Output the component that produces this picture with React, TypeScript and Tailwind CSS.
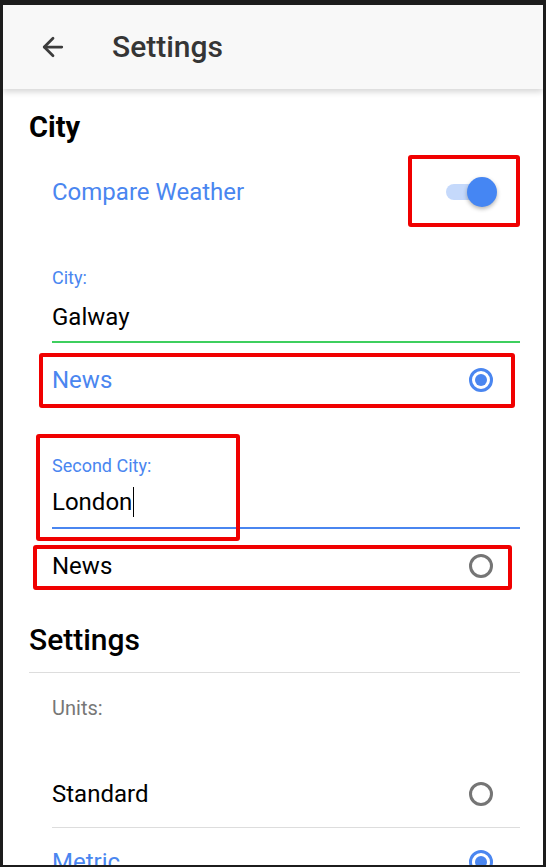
import * as React from 'react';
import { ArrowLeft } from 'lucide-react';

const Radio: React.FC<{ checked?: boolean }> = ({ checked }) => (
  <div
    className={`w-[24px] h-[24px] rounded-full border-[3px] flex items-center justify-center ${
      checked ? 'border-[#4a86f0]' : 'border-[#757575]'
    }`}
  >
    {checked && <div className="w-[12px] h-[12px] rounded-full bg-[#4a86f0]" />}
  </div>
);

const Mark: React.FC<{ className: string }> = ({ className }) => (
  <div className={`absolute border-[4px] border-[#f00000] rounded-[3px] pointer-events-none ${className}`} />
);

export default function App() {
  const font = { fontFamily: 'Roboto, "Noto Sans", sans-serif' };

  return (
    <div
      className="w-[546px] h-[867px] overflow-hidden bg-white border-l-[3px] border-r-[3px] border-t-[5px] border-b-[2px] border-[#1c1c1c] flex flex-col"
      style={font}
    >
      {/* Header */}
      <div className="h-[84px] shrink-0 bg-[#f8f8f8] flex items-center pl-[35px] shadow-[0_3px_6px_rgba(0,0,0,0.16)] relative z-10">
        <ArrowLeft className="w-[30px] h-[30px] text-[#3c3c3c]" strokeWidth={2.2} />
        <h1 className="ml-[44px] text-[30px] font-medium text-[#353535] leading-none">Settings</h1>
      </div>

      <div className="flex-1 pl-[26px] pr-[23px]">
        {/* City section */}
        <h2 className="mt-[18px] h-[40px] leading-[40px] text-[29px] font-bold text-black">City</h2>

        <div className="ml-[23px] mt-[9px] h-[72px] relative flex items-center justify-between">
          <span className="text-[24px] text-[#4a86f0]">Compare Weather</span>
          <div className="relative w-[50px] h-[30px] mr-[24px] flex items-center">
            <div className="absolute left-0 right-[4px] h-[16px] rounded-full bg-[#c5d9fb]" />
            <div className="absolute right-[-1px] w-[30px] h-[30px] rounded-full bg-[#4586f3] shadow-[0_2px_4px_rgba(0,0,0,0.3)]" />
          </div>
          <Mark className="right-0 top-[-1px] w-[112px] h-[72px]" />
        </div>

        <div className="ml-[23px] pt-[40px]">
          <div className="h-[20px] leading-[20px] text-[18px] text-[#4a86f0]">City:</div>
          <div className="mt-[11px] h-[36px] leading-[36px] text-[24px] text-black">Galway</div>
          <div className="mt-[6px] h-[2px] bg-[#3ecf5e]" />
        </div>

        <div className="ml-[23px] mt-[10px] h-[54px] relative flex items-center justify-between">
          <span className="text-[24px] text-[#4a86f0]">News</span>
          <div className="mr-[27px]">
            <Radio checked />
          </div>
          <Mark className="left-[-13px] right-[5px] top-0 bottom-[-1px]" />
        </div>

        <div className="ml-[23px] mt-[27px] pt-[22px] relative">
          <div className="h-[20px] leading-[20px] text-[18px] text-[#4a86f0]">Second City:</div>
          <div className="mt-[8px] h-[36px] leading-[36px] text-[24px] text-black flex items-center">
            London<span className="inline-block w-[1px] h-[30px] bg-black ml-[1px]" />
          </div>
          <div className="mt-[7px] h-[2px] bg-[#4a86f0]" />
          <Mark className="left-[-16px] top-0 w-[204px] h-[107px]" />
        </div>

        <div className="ml-[23px] mt-[16px] h-[45px] relative flex items-center justify-between">
          <span className="text-[24px] text-black pb-[3px]">News</span>
          <div className="mr-[27px] pb-[3px]">
            <Radio />
          </div>
          <Mark className="left-[-19px] right-[8px] top-0 bottom-0" />
        </div>

        {/* Settings section */}
        <h2 className="mt-[30px] h-[40px] leading-[40px] text-[30px] font-medium text-black">Settings</h2>
        <div className="mt-[12px] h-[1px] bg-[#dddddd]" />

        <div className="ml-[23px] mt-[23px] h-[24px] leading-[24px] text-[20px] text-[#777777]">Units:</div>

        <div className="ml-[23px] mt-[40px] h-[68px] flex items-center justify-between border-b border-[#dddddd]">
          <span className="text-[24px] text-black">Standard</span>
          <div className="mr-[27px]">
            <Radio />
          </div>
        </div>

        <div className="ml-[23px] h-[68px] flex items-center justify-between">
          <span className="text-[24px] text-[#4a86f0]">Metric</span>
          <div className="mr-[27px]">
            <Radio checked />
          </div>
        </div>
      </div>
    </div>
  );
}
